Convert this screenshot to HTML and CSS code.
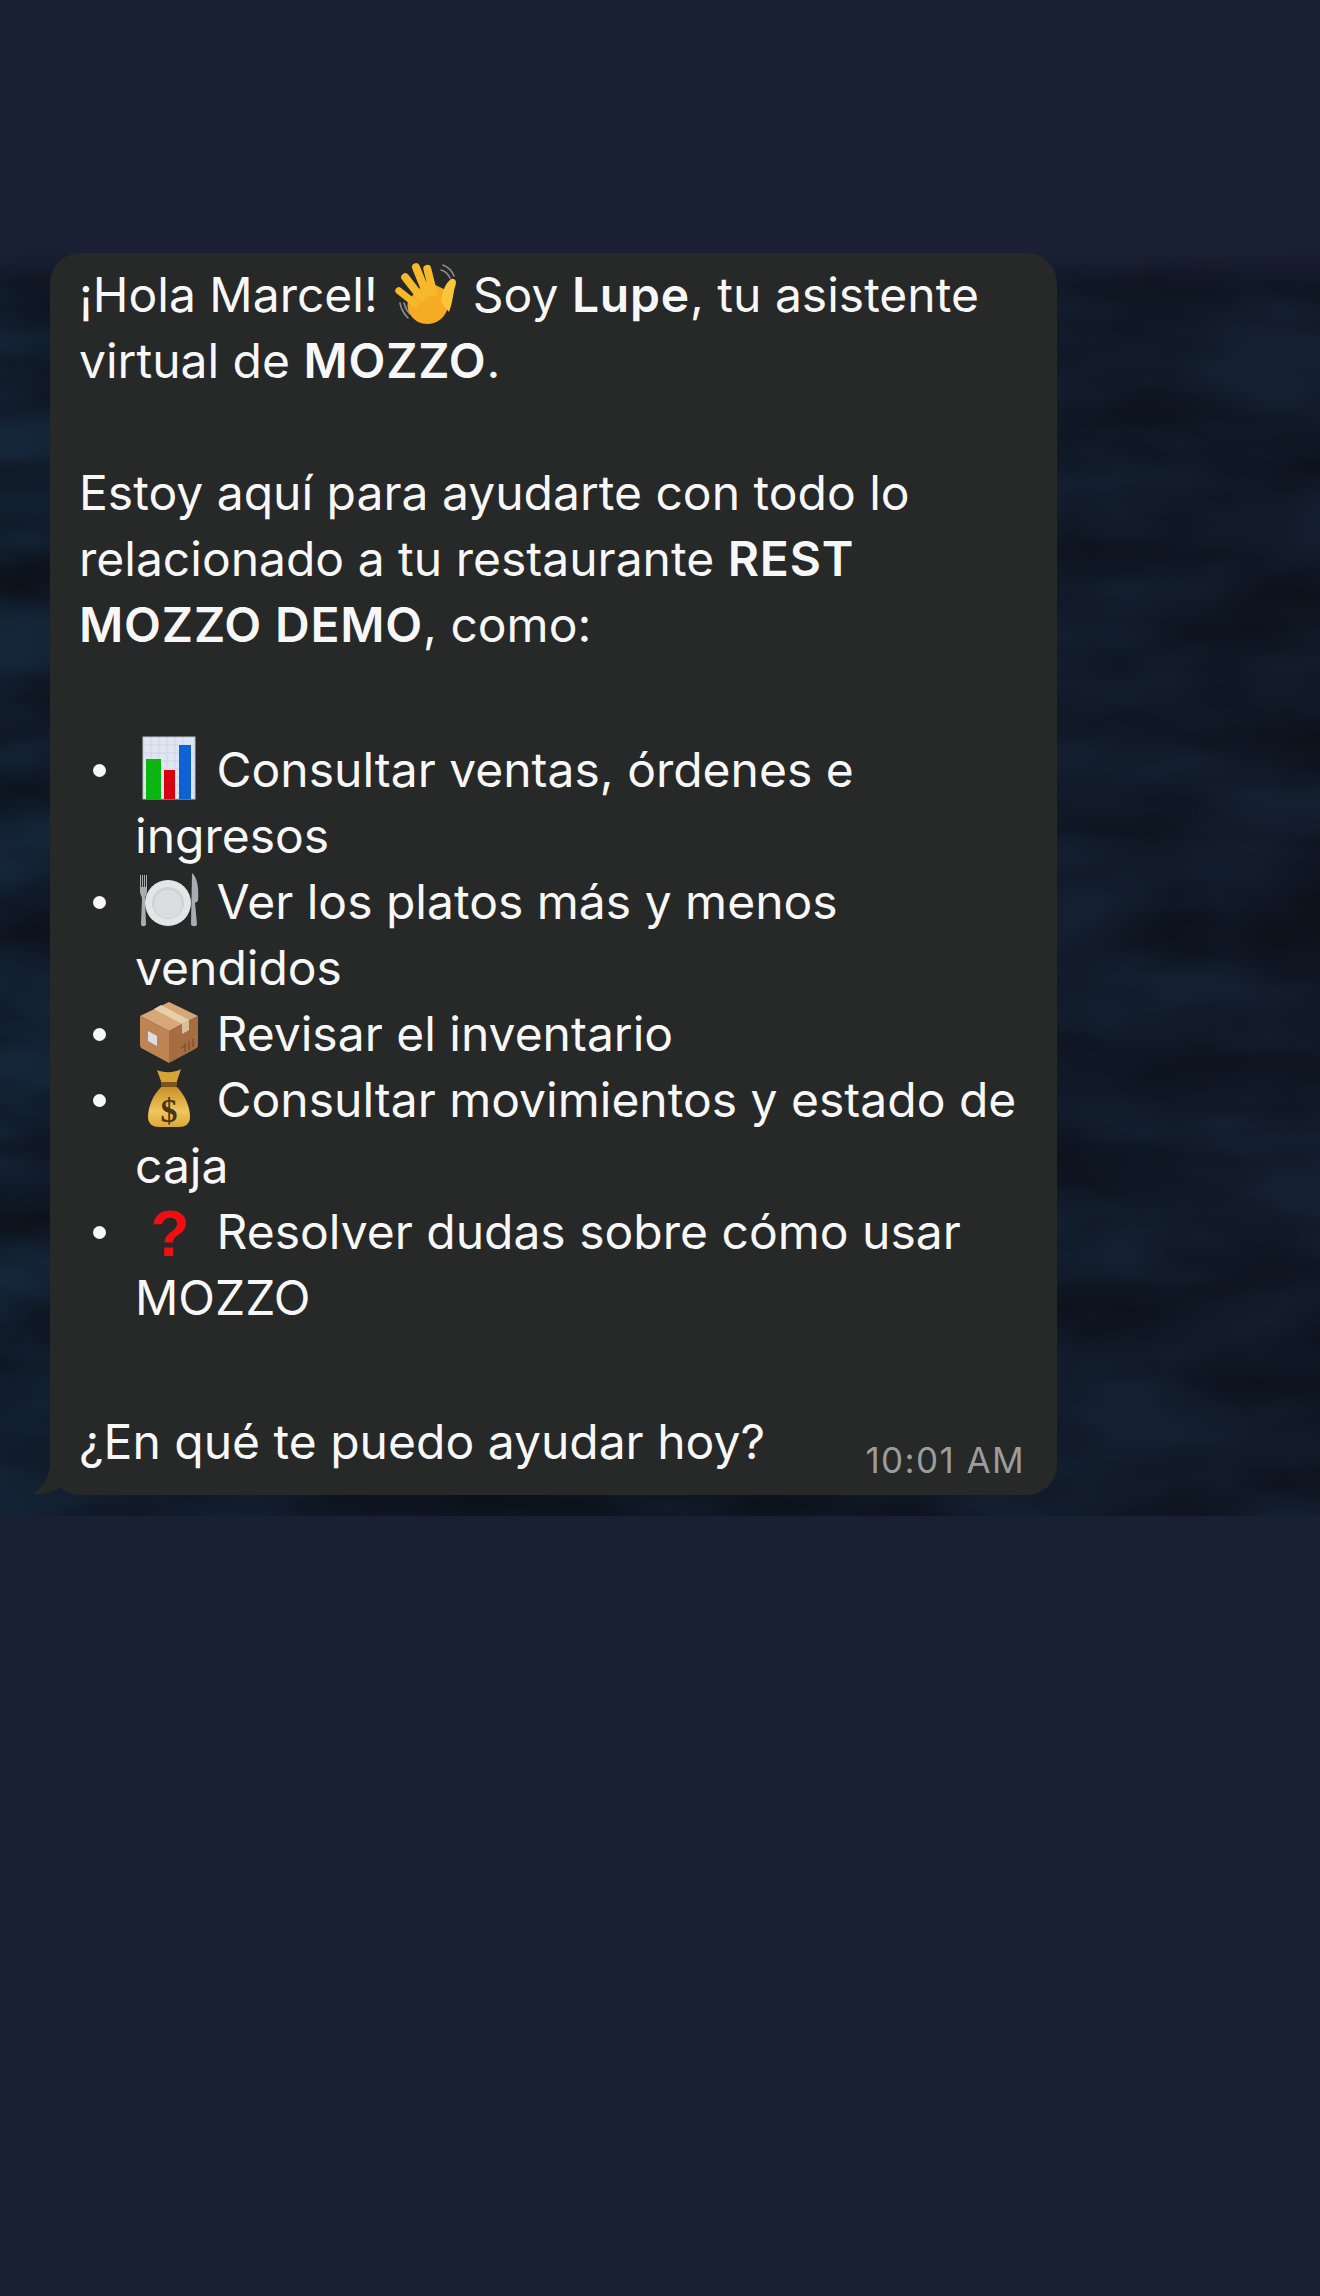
FILE: index.html
```html
<!DOCTYPE html>
<html lang="es">
<head>
    <meta charset="UTF-8">
    <meta name="viewport" content="width=device-width, initial-scale=1.0">
    <title>Mensaje de Lupe</title>
    <link rel="stylesheet" href="styles.css">
</head>
<body>
    <div class="top-band"></div>

    <div class="chat">
        <!-- wallpaper sits behind the message -->
        <svg class="wallpaper" width="1320" height="1266" aria-hidden="true">
            <defs>
                <linearGradient id="wallBase" x1="0" y1="0" x2="1" y2="0">
                    <stop offset="0" stop-color="#15273b"/>
                    <stop offset="0.12" stop-color="#121f31"/>
                    <stop offset="1" stop-color="#141f30"/>
                </linearGradient>
                <linearGradient id="wallFade" x1="0" y1="0" x2="0" y2="1">
                    <stop offset="0" stop-color="#1a2034"/>
                    <stop offset="1" stop-color="#1a2034" stop-opacity="0"/>
                </linearGradient>
                <filter id="waves" x="0" y="0" width="100%" height="100%" color-interpolation-filters="sRGB">
                    <feTurbulence type="fractalNoise" baseFrequency="0.005 0.014" numOctaves="3" seed="11"/>
                    <feColorMatrix type="matrix" values="0 0 0 0 0.045  0 0 0 0 0.065  0 0 0 0 0.1  1.7 0 0 0 -0.45"/>
                </filter>
            </defs>
            <rect width="1320" height="1266" fill="url(#wallBase)"/>
            <rect width="1320" height="1266" filter="url(#waves)"/>
            <rect width="1320" height="40" fill="url(#wallFade)"/>
        </svg>

        <div class="bubble">
            <svg class="tail" width="32" height="34" viewBox="0 0 32 34" aria-hidden="true">
                <path d="M18 0 C18 14 11 26 0 32 C10 33 20 31 28 25 L32 0 Z" fill="#272828"/>
            </svg>

            <p class="para para-first">¡Hola Marcel! <svg class="emoji" viewBox="0 0 68 66" aria-hidden="true">
                    <g fill="none" stroke="#8d8d8d" stroke-width="1.6" stroke-linecap="round">
                        <path d="M9 41 C10 47 13 52 17 56"/>
                        <path d="M13 41 C14 45 16 49 19 52"/>
                        <path d="M52 3 C57 5 61 9 63 14"/>
                        <path d="M50 8 C54 9 57 12 59 16"/>
                    </g>
                    <g fill="#f7b92b">
                        <path d="M27 60 C18 55 14 44 18 37 L36 19 L59 30 C58 40 58 50 50 57 C43 63 34 63 27 60 Z" fill="#f5ac22"/>
                        <rect x="26" y="1" width="8" height="36" rx="4" transform="rotate(-22 28 18)"/>
                        <rect x="18" y="10" width="8" height="34" rx="4" transform="rotate(-38 20 26)"/>
                        <rect x="35" y="3" width="8" height="32" rx="4" transform="rotate(-14 37 18)"/>
                        <rect x="12" y="22" width="7" height="28" rx="3.5" transform="rotate(-52 15 35)"/>
                        <path d="M50 40 C51 30 54 22 60 17 C65 16 66 20 64 25 C62 31 62 40 58 50 Z" fill="#fbc53a"/>
                    </g>
                </svg> Soy <strong>Lupe</strong>, tu asistente<br>virtual de <strong>MOZZO</strong>.</p>

            <p class="para">Estoy aquí para ayudarte con todo lo relacionado a tu restaurante <strong>REST MOZZO DEMO</strong>, como:</p>

            <ul class="options">
                <li><svg class="emoji" viewBox="0 0 68 66" aria-hidden="true">
                        <rect x="8" y="0" width="52" height="62" fill="#dfe6f1" stroke="#b9c2cf"/>
                        <g stroke="#c3cddd" stroke-width="0.6">
                            <path d="M8 8H60M8 16H60M8 24H60M8 32H60M8 40H60M8 48H60M8 56H60"/>
                            <path d="M16 0V62M24 0V62M32 0V62M40 0V62M48 0V62"/>
                        </g>
                        <rect x="11" y="22" width="15" height="40" fill="#0bb512"/>
                        <rect x="29" y="33" width="11" height="29" fill="#d8010f"/>
                        <rect x="44" y="8" width="12" height="54" fill="#0f62d6"/>
                    </svg> Consultar ventas, órdenes e ingresos</li>
                <li><svg class="emoji" viewBox="0 0 68 66" aria-hidden="true">
                        <g fill="#a9adb2">
                            <path d="M5 22 V6 h1 V18 h1 V6 h1 V18 h1 V6 h1 V18 h1 V6 h1 V22 C12 26 10 27 10 30 L11 55 C11 58 6 58 6 55 L7 30 C7 27 5 26 5 22 Z"/>
                            <path d="M57 4 C62 8 64 18 63 32 L60 34 L62 55 C62 58 56 58 56 55 Z"/>
                        </g>
                        <circle cx="33" cy="34" r="23" fill="#e4e5e6"/>
                        <circle cx="33" cy="34" r="16" fill="#cfd1d3"/>
                        <circle cx="33" cy="35" r="14" fill="#dcdddf"/>
                    </svg> Ver los platos más y menos vendidos</li>
                <li><svg class="emoji" viewBox="0 0 68 66" aria-hidden="true">
                        <path d="M34 1 L63 15 L34 30 L5 15 Z" fill="#d6a878"/>
                        <path d="M5 15 L34 30 V62 L8 48 C6 47 5 46 5 44 Z" fill="#bf8454"/>
                        <path d="M63 15 L34 30 V62 L60 48 C62 47 63 46 63 44 Z" fill="#a66d42"/>
                        <path d="M19 8 L26 4 L54 19 L47 23 Z" fill="#e6cfa9"/>
                        <path d="M47 23 L54 19 V29 L47 33 Z" fill="#d9c09a"/>
                        <path d="M13 30 L22 35 V45 L13 40 Z" fill="#dcdfe3"/>
                        <path d="M46 47 l5 -3 M50 42 v9 M54 40 v9 M58 38 v8" stroke="#845430" stroke-width="1.6" fill="none"/>
                    </svg> Revisar el inventario</li>
                <li><svg class="emoji" viewBox="0 0 68 66" aria-hidden="true">
                        <defs>
                            <linearGradient id="bagFill" x1="0" y1="0" x2="0" y2="1">
                                <stop offset="0" stop-color="#c98f28"/>
                                <stop offset="0.6" stop-color="#f0c65c"/>
                                <stop offset="1" stop-color="#dca83a"/>
                            </linearGradient>
                        </defs>
                        <path d="M22 3 C28 6 40 6 46 2 L41 17 H27 Z" fill="#d9a437"/>
                        <rect x="26" y="15" width="16" height="5" rx="2" fill="#7c5518"/>
                        <path d="M26 20 H42 C50 28 55 40 55 50 C55 57 50 60 44 60 H24 C18 60 13 57 13 50 C13 40 18 28 26 20 Z" fill="url(#bagFill)"/>
                        <text class="bag-sign" x="34" y="55">$</text>
                    </svg> Consultar movimientos y estado de caja</li>
                <li><svg class="emoji" viewBox="0 0 68 66" aria-hidden="true">
                        <text class="red-mark" x="35" y="57">?</text>
                    </svg> Resolver dudas sobre cómo usar MOZZO</li>
            </ul>

            <div class="last-row">
                <span>¿En qué te puedo ayudar hoy?</span>
                <time class="time">10:01 AM</time>
            </div>
        </div>
    </div>
</body>
</html>
```

FILE: styles.css
```css
/* Page */
body {
    margin: 0;
    height: 2296px;
    background-color: #1a2034;
    color: #f7f7f7;
    font-family: 'Inter', 'Noto Sans', sans-serif;
    font-size: 48px;
    line-height: 66px;
    overflow: hidden;
}

.top-band {
    height: 250px;
}

/* Chat area */
.chat {
    position: relative;
    height: 1266px;
    padding-top: 3px;
    box-sizing: border-box;
}

.wallpaper {
    position: absolute;
    top: 0;
    left: 0;
}

/* Message bubble */
.bubble {
    position: relative;
    box-sizing: border-box;
    width: 1007px;
    height: 1242px;
    margin-left: 50px;
    padding: 9px 30px 0 29px;
    background-color: #272828;
    border-radius: 30px;
}

.tail {
    position: absolute;
    left: -18px;
    bottom: -1px;
}

.para {
    margin: 0;
}

.para-first {
    margin-bottom: 66px;
}

.para strong {
    font-weight: 600;
    letter-spacing: 0.8px;
}

/* List */
.options {
    margin: 79px 0 78px;
    padding: 0 0 0 56px;
    list-style: none;
}

.options li {
    position: relative;
}

.options li::before {
    content: "";
    position: absolute;
    left: -42px;
    top: 27px;
    width: 13px;
    height: 13px;
    border-radius: 50%;
    background-color: #f7f7f7;
}

.emoji {
    width: 68px;
    height: 66px;
    vertical-align: top;
    overflow: visible;
}

.bag-sign {
    font-family: 'Liberation Serif', serif;
    font-size: 34px;
    font-weight: 700;
    fill: #4a3413;
    text-anchor: middle;
}

.red-mark {
    font-family: 'Liberation Sans', sans-serif;
    font-size: 64px;
    font-weight: 700;
    fill: #ee0f14;
    text-anchor: middle;
}

/* Last line with the time */
.last-row {
    display: flex;
    justify-content: space-between;
}

.time {
    padding: 27px 2px 0 0;
    color: #9c9c9c;
    font-size: 35px;
    letter-spacing: 1.4px;
    line-height: 48px;
}
```
